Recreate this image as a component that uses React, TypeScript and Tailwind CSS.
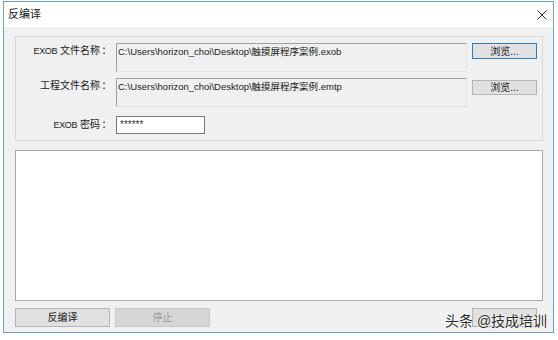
import * as React from "react";

const cjk = { fontFamily: '"Liberation Sans", "Noto Sans CJK SC", sans-serif' };

function PathBox({ value }: { value: string }) {
  return (
    <div className="ml-[3px] w-[351px] h-[29px] bg-[#f0f0f0] border-t border-l border-[#a0a0a0] border-r-[#e3e3e3] border-b-[#e3e3e3] border-r border-b px-[1px] pt-[1px] text-[9.5px] leading-[13px] text-[#1a1a1a]">
      {value}
    </div>
  );
}

function Label({ latin, text }: { latin?: string; text: string }) {
  return (
    <div className="w-[97px] flex justify-end items-baseline text-[10px] leading-[13px] text-[#1a1a1a]">
      {latin && <span className="text-[9px] tracking-[-0.4px] mr-[3px]">{latin}</span>}
      <span>{text}</span>
      <span className="inline-block w-[13px] text-center">：</span>
    </div>
  );
}

function Button({ label, focused, disabled, className }: { label: string; focused?: boolean; disabled?: boolean; className?: string }) {
  return (
    <div
      className={`flex items-center justify-center border text-[10px] ${
        focused
          ? "border-[#2f7cc4] bg-[#e1e1e1] text-[#1a1a1a]"
          : disabled
          ? "border-[#c8c8c8] bg-[#d6d6d6] text-[#9a9a9a]"
          : "border-[#b4b4b4] bg-[#e1e1e1] text-[#1a1a1a]"
      } ${className ?? ""}`}
    >
      {label}
    </div>
  );
}

export default function App() {
  return (
    <div className="w-[558px] h-[340px] bg-white pl-[3px] pt-[1px] relative" style={cjk}>
      <div className="w-[551px] h-[332px] border border-[#6ea1d6] flex flex-col">
        {/* title bar */}
        <div className="h-[25px] bg-white flex items-center justify-between pl-[4px] pr-[6px]">
          <span className="text-[11px] text-[#1a1a1a]">反编译</span>
          <svg width="10" height="10" viewBox="0 0 10 10">
            <path d="M0.5 0.5 L9.5 9.5 M9.5 0.5 L0.5 9.5" stroke="#333" strokeWidth="1" fill="none" />
          </svg>
        </div>

        {/* client */}
        <div className="flex-1 bg-[#f0f0f0] pl-[11px] pt-[9px]">
          <div className="w-[528px] h-[105px] border border-[#dadada] pt-[6px] flex flex-col">
            <div className="flex items-start">
              <div className="pt-[1px]">
                <Label latin="EXOB" text="文件名称" />
              </div>
              <PathBox value="C:\Users\horizon_choi\Desktop\触摸屏程序案例.exob" />
              <Button label="浏览..." focused className="ml-[5px] w-[65px] h-[16px]" />
            </div>
            <div className="flex items-start mt-[6px]">
              <div className="pt-[1px]">
                <Label text="工程文件名称" />
              </div>
              <PathBox value="C:\Users\horizon_choi\Desktop\触摸屏程序案例.emtp" />
              <Button label="浏览..." className="ml-[5px] mt-[2px] w-[65px] h-[15px]" />
            </div>
            <div className="flex items-center mt-[9px]">
              <Label latin="EXOB" text="密码" />
              <div className="ml-[3px] w-[89px] h-[18px] bg-white border border-[#7a7a7a] pl-[3px] text-[10px] leading-[16px] text-[#333]">
                ******
              </div>
            </div>
          </div>

          <div className="mt-[9px] w-[528px] h-[151px] bg-white border border-[#a8a8a8]" />

          <div className="mt-[7px] flex items-center">
            <Button label="反编译" className="w-[95px] h-[19px]" />
            <Button label="停止" disabled className="ml-[5px] w-[95px] h-[19px]" />
            <Button label="" className="ml-[262px] w-[65px] h-[19px]" />
          </div>
        </div>
      </div>

      <div
        className="absolute left-[445px] top-[312px] text-[14px] leading-[18px] text-[#2a2a2a]"
        style={{ textShadow: "0 0 2px #fff, 0 0 2px #fff" }}
      >
        头条 @技成培训
      </div>
    </div>
  );
}
